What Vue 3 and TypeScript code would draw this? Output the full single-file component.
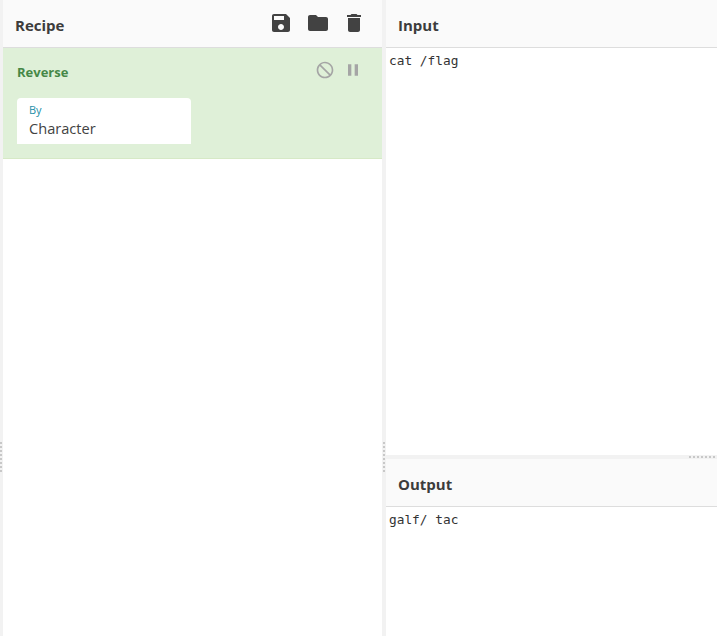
<script setup lang="ts">
const icons = {
  save: 'M17 3H5c-1.11 0-2 .9-2 2v14c0 1.1.89 2 2 2h14c1.1 0 2-.9 2-2V7l-4-4zm-5 16c-1.66 0-3-1.34-3-3s1.34-3 3-3 3 1.34 3 3-1.34 3-3 3zm3-10H5V5h10v4z',
  folder: 'M10 4H4c-1.1 0-1.99.9-1.99 2L2 18c0 1.1.9 2 2 2h16c1.1 0 2-.9 2-2V8c0-1.1-.9-2-2-2h-8l-2-2z',
  trash: 'M6 19c0 1.1.9 2 2 2h8c1.1 0 2-.9 2-2V7H6v12zM19 4h-3.5l-1-1h-5l-1 1H5v2h14V4z',
  block: 'M12 2C6.48 2 2 6.48 2 12s4.48 10 10 10 10-4.48 10-10S17.52 2 12 2zm0 18c-4.42 0-8-3.58-8-8 0-1.85.63-3.55 1.69-4.9L16.9 18.31C15.55 19.37 13.85 20 12 20zm6.31-3.1L7.1 5.69C8.45 4.63 10.15 4 12 4c4.42 0 8 3.58 8 8 0 1.85-.63 3.55-1.69 4.9z',
  pause: 'M6 19h4V5H6v14zm8-14v14h4V5h-4z',
}
</script>

<template>
  <div class="app">
    <div class="vdots left-dots"></div>
    <section class="recipe">
      <header class="head recipe-head">
        <h2>Recipe</h2>
        <div class="tools">
          <svg class="tool" viewBox="0 0 24 24"><path :d="icons.save" /></svg>
          <svg class="tool" viewBox="0 0 24 24"><path :d="icons.folder" /></svg>
          <svg class="tool" viewBox="0 0 24 24"><path :d="icons.trash" /></svg>
        </div>
      </header>
      <div class="op">
        <div class="op-top">
          <span class="op-name">Reverse</span>
          <div class="op-tools">
            <svg class="op-icon" viewBox="0 0 24 24"><path :d="icons.block" /></svg>
            <svg class="op-icon" viewBox="0 0 24 24"><path :d="icons.pause" /></svg>
          </div>
        </div>
        <div class="field">
          <span class="field-label">By</span>
          <span class="field-value">Character</span>
        </div>
      </div>
    </section>
    <div class="gutter">
      <div class="vdots mid-dots"></div>
    </div>
    <section class="io">
      <div class="pane input">
        <header class="head"><h2>Input</h2></header>
        <pre class="code">cat /flag</pre>
      </div>
      <div class="hgutter"><div class="hdots"></div></div>
      <div class="pane output">
        <header class="head"><h2>Output</h2></header>
        <pre class="code">galf/ tac</pre>
      </div>
    </section>
  </div>
</template>

<style scoped>
.app {
  position: relative;
  display: flex;
  width: 717px;
  height: 636px;
  overflow: hidden;
  padding-left: 3px;
  box-sizing: border-box;
  background: #f2f2f2;
  font-family: "Open Sans", sans-serif;
  color: #424242;
}
.recipe {
  width: 379px;
  flex: none;
  background: #fff;
  display: flex;
  flex-direction: column;
}
.head {
  height: 48px;
  box-sizing: border-box;
  flex: none;
  display: flex;
  align-items: center;
  justify-content: space-between;
  background: #fafafa;
  border-bottom: 1px solid #dddddd;
  padding-left: 12px;
}
.head h2 {
  margin: 2px 0 0;
  font-size: 15px;
  font-weight: 700;
  line-height: 20px;
  color: #3c3c3c;
}
.tools {
  display: flex;
  gap: 12.5px;
  padding-right: 16px;
  margin-bottom: 1px;
}
.tool {
  width: 24px;
  height: 24px;
  fill: #424242;
}
.op {
  height: 111px;
  box-sizing: border-box;
  background: #dff0d8;
  border-bottom: 1px solid #d6e9c6;
  padding: 14px 14px 0;
}
.op-top {
  display: flex;
  justify-content: space-between;
  align-items: center;
  height: 20px;
}
.op-name {
  font-size: 13px;
  font-weight: 700;
  color: #468847;
}
.op-tools {
  display: flex;
  gap: 8px;
  padding-right: 5px;
  margin-top: -4px;
}
.op-icon {
  width: 20px;
  height: 20px;
  fill: #a5a5a5;
}
.field {
  margin-top: 16px;
  width: 174px;
  height: 46px;
  background: #fff;
  border-radius: 4px 4px 0 0;
  padding-left: 12px;
  box-sizing: border-box;
  display: flex;
  flex-direction: column;
}
.field-label {
  font-size: 11px;
  line-height: 14px;
  margin-top: 5px;
  color: #1f8fa8;
}
.field-value {
  font-size: 14.6px;
  line-height: 20px;
  margin-top: 1px;
  color: #424242;
}
.gutter {
  width: 4px;
  flex: none;
  position: relative;
}
.vdots {
  position: absolute;
  width: 2px;
  height: 30px;
  background: repeating-linear-gradient(to bottom, #c8c8c8 0 2px, transparent 2px 4px);
}
.left-dots {
  left: 0;
  top: 442px;
}
.mid-dots {
  left: 1px;
  top: 442px;
}
.io {
  flex: 1;
  display: flex;
  flex-direction: column;
  min-width: 0;
}
.pane {
  background: #fff;
  display: flex;
  flex-direction: column;
}
.input {
  height: 455px;
  flex: none;
}
.output {
  flex: 1;
}
.hgutter {
  height: 4px;
  flex: none;
  position: relative;
}
.hdots {
  position: absolute;
  right: 0;
  top: 1px;
  width: 28px;
  height: 2px;
  background: repeating-linear-gradient(to right, #c8c8c8 0 2px, transparent 2px 4px);
}
.code {
  margin: 0;
  padding: 4px 3px;
  font-family: "DejaVu Sans Mono", "Liberation Mono", monospace;
  font-size: 12.8px;
  line-height: 17px;
  color: #333;
}
</style>

<style>
body { margin: 0; }
</style>
